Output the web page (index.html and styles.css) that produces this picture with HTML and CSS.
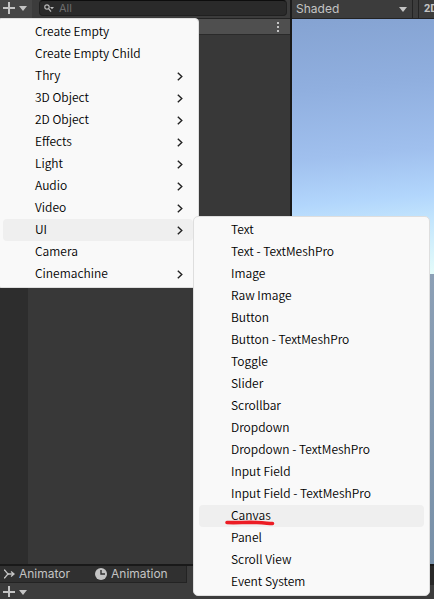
FILE: index.html
```html
<!DOCTYPE html>
<html lang="en">
<head>
<meta charset="utf-8">
<title>Hierarchy</title>
<link rel="stylesheet" href="styles.css">
</head>
<body>
<div class="editor">
  <div class="panels">
    <section class="hierarchy">
      <div class="toolbar">
        <button class="add" aria-label="Create">
          <svg width="32" height="18" viewBox="0 0 32 18"><path d="M3 7h12v2H3zM8 2h2v12H8zM19 6h8l-4 5z" fill="#c4c4c4"/></svg>
        </button>
        <label class="search">
          <svg width="10" height="9" viewBox="0 0 10 9"><circle cx="3" cy="3" r="2.2" fill="none" stroke="#bbb" stroke-width="1.2"/><path d="M4.6 4.6L7 7.6" stroke="#bbb" stroke-width="1.3"/><path d="M6 3h4L8 5.2z" fill="#bbb"/></svg>
          <input type="text" placeholder="All" aria-label="Search">
        </label>
      </div>
      <div class="tree">
        <div class="gutter"></div>
        <div class="rows">
          <div class="scene-row">
            <button class="more" aria-label="Scene options">
              <svg width="2" height="10" viewBox="0 0 2 10"><path d="M0 0h2v2H0zM0 4h2v2H0zM0 8h2v2H0z" fill="#c4c4c4"/></svg>
            </button>
          </div>
        </div>
      </div>
    </section>
    <section class="scene">
      <div class="scene-bar">
        <button class="shading">Shaded
          <svg width="8" height="5" viewBox="0 0 8 5"><path d="M0 0h8L4 5z" fill="#c4c4c4"/></svg>
        </button>
        <div class="spacer"></div>
        <button class="mode">2D</button>
      </div>
      <div class="viewport"><div class="sky"></div><div class="ground"></div></div>
    </section>
  </div>
  <div class="dock">
    <section class="dock-left">
      <div class="tabs">
        <button class="tab">
          <svg width="11" height="10" viewBox="0 0 11 10"><path d="M0 1C2 1 2 5 5 5h5M0 9c2 0 2-4 5-4M7 2.500l3 2.500-3 2.500" fill="none" stroke="#c4c4c4" stroke-width="1.300"/></svg>
          Animator
        </button>
        <button class="tab">
          <svg width="12" height="12" viewBox="0 0 12 12"><circle cx="6" cy="6" r="6" fill="#c4c4c4"/><path d="M6 2v4h4" fill="none" stroke="#303030" stroke-width="1.400"/></svg>
          Animation
        </button>
      </div>
      <div class="dock-bar">
        <button class="add" aria-label="Add parameter">
          <svg width="32" height="14" viewBox="0 0 32 14"><path d="M3 8h12v2H3zM8 3h2v11H8zM19 7h8l-4 5z" fill="#c4c4c4"/></svg>
        </button>
      </div>
    </section>
    <section class="dock-right"><div class="dock-head"></div></section>
  </div>

  <div class="menu menu-create" role="menu">
    <button class="item">Create Empty</button>
    <button class="item">Create Empty Child</button>
    <button class="item">Thry<svg class="arrow" viewBox="0 0 6 9"><path d="M.8.7L4.800 4.500.8 8.300"/></svg></button>
    <button class="item">3D Object<svg class="arrow" viewBox="0 0 6 9"><path d="M.8.7L4.800 4.500.8 8.300"/></svg></button>
    <button class="item">2D Object<svg class="arrow" viewBox="0 0 6 9"><path d="M.8.7L4.800 4.500.8 8.300"/></svg></button>
    <button class="item">Effects<svg class="arrow" viewBox="0 0 6 9"><path d="M.8.7L4.800 4.500.8 8.300"/></svg></button>
    <button class="item">Light<svg class="arrow" viewBox="0 0 6 9"><path d="M.8.7L4.800 4.500.8 8.300"/></svg></button>
    <button class="item">Audio<svg class="arrow" viewBox="0 0 6 9"><path d="M.8.7L4.800 4.500.8 8.300"/></svg></button>
    <button class="item">Video<svg class="arrow" viewBox="0 0 6 9"><path d="M.8.7L4.800 4.500.8 8.300"/></svg></button>
    <button class="item active">UI<svg class="arrow" viewBox="0 0 6 9"><path d="M.8.7L4.800 4.500.8 8.300"/></svg></button>
    <button class="item">Camera</button>
    <button class="item">Cinemachine<svg class="arrow" viewBox="0 0 6 9"><path d="M.8.7L4.800 4.500.8 8.300"/></svg></button>
  </div>

  <div class="menu menu-ui" role="menu">
    <button class="item">Text</button>
    <button class="item">Text - TextMeshPro</button>
    <button class="item">Image</button>
    <button class="item">Raw Image</button>
    <button class="item">Button</button>
    <button class="item">Button - TextMeshPro</button>
    <button class="item">Toggle</button>
    <button class="item">Slider</button>
    <button class="item">Scrollbar</button>
    <button class="item">Dropdown</button>
    <button class="item">Dropdown - TextMeshPro</button>
    <button class="item">Input Field</button>
    <button class="item">Input Field - TextMeshPro</button>
    <button class="item active">Canvas
      <svg class="mark" width="50" height="6" viewBox="0 0 50 6"><path d="M2 2.500C12 3 22 2 32 2.500S43 3.500 47.500 3.500" fill="none" stroke="#ec1c24" stroke-width="3.600" stroke-linecap="round"/></svg>
    </button>
    <button class="item">Panel</button>
    <button class="item">Scroll View</button>
    <button class="item">Event System</button>
  </div>
</div>
</body>
</html>
```
FILE: styles.css
```css
* { box-sizing: border-box; }

body {
  margin: 0;
  background: #383838;
  color: #c4c4c4;
  font: 12px/16px Inter, "Liberation Sans", sans-serif;
}

button, input {
  margin: 0;
  padding: 0;
  border: 0;
  background: none;
  color: inherit;
  font: inherit;
}

svg { display: block; flex: none; }

.editor {
  position: relative;
  display: flex;
  flex-direction: column;
  height: 100vh;
  overflow: hidden;
}

.panels { display: flex; flex: 1; min-height: 0; }

.hierarchy {
  display: flex;
  flex-direction: column;
  flex: 0 0 292px;
  border-right: 2px solid #191919;
}

.toolbar {
  display: flex;
  height: 19px;
  background: #3c3c3c;
  border-bottom: 1px solid #232323;
}

.add { width: 32px; background: #464646; }

.search {
  display: flex;
  align-items: center;
  flex: 1;
  gap: 5px;
  height: 16px;
  margin: 0 3px 0 7px;
  padding-left: 4px;
  background: #2a2a2a;
  border: 1px solid #202020;
  border-top-color: #0d0d0d;
  border-radius: 4px;
}

.search input { flex: 1; min-width: 0; height: 14px; font-size: 11px; }
.search input::placeholder { color: #6e6e6e; opacity: 1; }

.tree { display: flex; flex: 1; }
.gutter { width: 28px; background: #2d2d2d; }
.rows { flex: 1; }

.scene-row {
  display: flex;
  justify-content: flex-end;
  height: 16px;
  padding-right: 11px;
  background: #4f4f4f;
  border-bottom: 1px solid #2a2a2a;
}

.more { display: flex; align-items: center; }

.scene { display: flex; flex-direction: column; flex: 1; min-width: 0; }

.scene-bar {
  display: flex;
  height: 19px;
  background: #3c3c3c;
  border-bottom: 1px solid #232323;
  overflow: hidden;
}

.shading {
  display: flex;
  align-items: center;
  justify-content: space-between;
  flex: 1;
  padding: 0 5px 0 4px;
  border-right: 1px solid #232323;
}

.spacer { width: 5px; }

.mode {
  width: 16px;
  padding-left: 5px;
  overflow: hidden;
  border-left: 1px solid #232323;
  font: 700 11px/16px Roboto, sans-serif;
  text-align: left;
  white-space: nowrap;
}

.viewport { display: flex; flex-direction: column; flex: 1; }
.sky { flex: 255; background: linear-gradient(175deg, #e4fcfa, #c4e6fd 20%, #b2d6fc 30%, #a0c0ee 47%, #90afdf 73%, #85a3d2); transform: rotate(180deg); }
.ground { flex: 290; background: linear-gradient(#8ca0b6, #7890a8); }

.dock {
  display: flex;
  height: 35px;
  border-top: 2px solid #191919;
}

.dock-left { display: flex; flex-direction: column; flex: 1; }
.tabs { display: flex; height: 19px; background: #3c3c3c; }

.tab {
  display: flex;
  align-items: center;
  gap: 4px;
  padding: 0 9px 0 4px;
  background: #303030;
  border-bottom: 1px solid #232323;
}

.tab + .tab { padding: 0 18px 0 16px; border-right: 1px solid #232323; }

.dock-bar { flex: 1; background: #3c3c3c; }
.dock-bar .add { background: none; }
.dock-right { width: 8px; background: #3c3c3c; }
.dock-head { height: 19px; background: #282828; }

.menu {
  position: absolute;
  display: flex;
  flex-direction: column;
  padding: 2px 5px;
  background: #f9f9f9;
  border: 1px solid #dedede;
  border-radius: 5px;
  color: #000;
  font: 350 12px/20px "Noto Sans CJK KR", "Noto Sans", sans-serif;
}

.menu-create { top: 18px; left: -3px; width: 202px; border-radius: 4px; }
.menu-ui { top: 216px; left: 193px; width: 237px; }

.item {
  position: relative;
  display: flex;
  align-items: center;
  justify-content: space-between;
  height: 22px;
  padding: 0 10px 2px 32px;
  border-radius: 4px;
  white-space: nowrap;
}

.active { background: #efefef; }
.arrow { width: 6px; height: 9px; margin-top: 2px; }
.arrow path { fill: none; stroke: #222; stroke-width: 1.4; }
.mark { position: absolute; left: 26px; top: 15px; }
```
